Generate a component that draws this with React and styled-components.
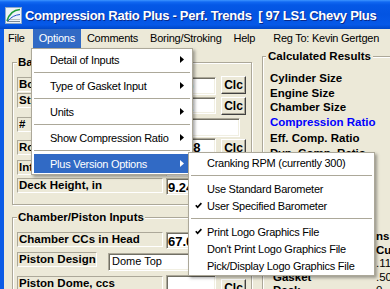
import React from "react";
import styled, { createGlobalStyle } from "styled-components";

const Global = createGlobalStyle`
  html, body { margin: 0; padding: 0; background: #ECE9D8; }
  #root { width: 390px; height: 289px; overflow: hidden; }
`;

const UI = `"Liberation Sans", Arial, sans-serif`;

const Window = styled.div`
  position: relative;
  width: 390px;
  height: 289px;
  overflow: hidden;
  display: flex;
  flex-direction: column;
  background: #ECE9D8;
  font-family: ${UI};
`;

const TitleBar = styled.div`
  flex: none;
  height: 29px;
  box-sizing: border-box;
  padding: 2px 0 0 5px;
  display: flex;
  align-items: center;
  gap: 3px;
  background: linear-gradient(
    to bottom,
    #3D95FF 0px,
    #1168F2 2px,
    #0558E6 5px,
    #0354E2 50%,
    #0659E8 85%,
    #0048C8 100%
  );
  white-space: nowrap;
`;

const TitleText = styled.span`
  color: #fff;
  font: bold 13px/16px ${UI};
  letter-spacing: -0.28px;
  white-space: pre;
  text-shadow: 1px 1px 0 #0A2A8A;
`;

const Frame = styled.div`
  flex: 1;
  display: flex;
  flex-direction: column;
  border-left: 4px solid #0B5BE6;
  min-height: 0;
`;

const MenuBar = styled.div`
  flex: none;
  height: 19px;
  display: flex;
  align-items: stretch;
  font: 11px/19px ${UI};
  letter-spacing: -0.25px;
  color: #000;
  white-space: nowrap;
`;

const MenuBarItem = styled.div`
  padding: 0 6px 0 ${(p) => p.$pl ?? 6}px;
  padding-right: ${(p) => p.$pr ?? 6}px;
  background: ${(p) => (p.$active ? "#316AC5" : "transparent")};
  color: ${(p) => (p.$active ? "#fff" : "#000")};
`;

const RegLabel = styled.div`
  margin-left: 12px;
`;

const Content = styled.div`
  flex: 1;
  display: flex;
  align-items: flex-start;
  padding-left: 8px;
  min-height: 0;
`;

const LeftCol = styled.div`
  flex: none;
  width: 240px;
  display: flex;
  flex-direction: column;
`;

const RightCol = styled.div`
  flex: none;
  width: 170px;
  margin-left: 10px;
`;

const Group = styled.fieldset`
  box-sizing: border-box;
  min-width: 0;
  margin: ${(p) => p.$mt}px 0 0 0;
  padding: ${(p) => p.$pt}px ${(p) => p.$pr ?? 4}px ${(p) => p.$pb ?? 0}px ${(p) => p.$pl ?? 4}px;
  border: 1px solid #ACA899;
  box-shadow: inset 1px 1px 0 #fff, 1px 1px 0 #fff;
  display: flex;
  flex-direction: column;
`;

const Legend = styled.legend`
  padding: 0 ${(p) => p.$px ?? 1}px;
  font: bold 11.5px/13px ${UI};
  color: #000;
  background: #ECE9D8;
  white-space: nowrap;
`;

const Row = styled.div`
  display: flex;
  align-items: flex-start;
  height: ${(p) => p.$h}px;
`;

const FieldLabel = styled.div`
  box-sizing: border-box;
  flex: none;
  width: ${(p) => p.$w ?? 146}px;
  height: 15px;
  margin-top: ${(p) => p.$dy ?? 0}px;
  padding-left: 1px;
  border: 1px solid;
  border-color: #ACA899 #fff #fff #ACA899;
  font: bold 11.5px/13px ${UI};
  color: #000;
  white-space: pre;
  overflow: hidden;
`;

const TextBox = styled.div`
  box-sizing: border-box;
  flex: none;
  width: ${(p) => p.$w ?? 50}px;
  height: ${(p) => p.$h ?? 18}px;
  margin-left: ${(p) => p.$ml ?? 3}px;
  margin-top: ${(p) => p.$dy ?? 0}px;
  padding: 1px 0 0 1px;
  background: #fff;
  border: 1px solid;
  border-color: #ACA899 #fff #fff #ACA899;
  box-shadow: inset 1px 1px 0 #716F64, inset -1px -1px 0 #F1EFE2;
  font: bold 13px/15px ${UI};
  color: #000;
  white-space: nowrap;
  overflow: hidden;
`;

const Combo = styled(TextBox)`
  display: flex;
  justify-content: space-between;
  padding: 0 0 0 3px;
  font: 11px/15px ${UI};
`;

const ComboButton = styled.span`
  width: 15px;
  background: #ECE9D8;
  border-left: 1px solid #fff;
`;

const ClcButton = styled.div`
  box-sizing: border-box;
  flex: none;
  width: 25px;
  height: 18px;
  margin-left: 5px;
  margin-top: ${(p) => p.$dy ?? 0}px;
  background: #ECE9D8;
  border: 1px solid;
  border-color: #fff #404040 #404040 #fff;
  box-shadow: inset -1px -1px 0 #ACA899;
  font: bold 12px/16px ${UI};
  color: #000;
  text-align: center;
`;

const ResultList = styled.div`
  display: flex;
  flex-direction: column;
  padding-left: 4px;
`;

const Result = styled.div`
  font: bold 11.5px/14.5px ${UI};
  color: ${(p) => p.$color ?? "#000"};
  margin-top: ${(p) => p.$mt ?? 0}px;
  white-space: nowrap;
`;

const LowerGrid = styled.div`
  display: grid;
  grid-template-columns: 103px auto;
  grid-auto-rows: 13.5px;
  margin-top: 70px;
  padding-left: 7px;
  font: 11.5px/13.5px ${UI};
  color: #000;
  white-space: nowrap;
`;

const Cell = styled.div`
  font-weight: ${(p) => (p.$bold ? "bold" : "normal")};
`;

/* ---------- menus ---------- */

const Menu = styled.div`
  position: absolute;
  left: ${(p) => p.$x}px;
  top: ${(p) => p.$y}px;
  width: ${(p) => p.$w}px;
  box-sizing: border-box;
  padding: 1px 2px;
  background: #fff;
  border: 1px solid #ACA899;
  box-shadow: 2px 2px 3px rgba(0, 0, 0, 0.35);
  font: 11px ${UI};
  letter-spacing: -0.25px;
  color: #000;
  white-space: nowrap;
`;

const MenuItem = styled.div`
  display: flex;
  align-items: center;
  height: ${(p) => p.$h}px;
  padding-right: 6px;
  background: ${(p) => (p.$active ? "#316AC5" : "transparent")};
  color: ${(p) => (p.$active ? "#fff" : "#000")};
`;

const CheckSlot = styled.span`
  flex: none;
  width: 16px;
  display: flex;
  align-items: center;
  padding-left: 4px;
  box-sizing: border-box;
`;

const ItemText = styled.span`
  flex: 1;
`;

const Separator = styled.div`
  height: ${(p) => p.$h}px;
  display: flex;
  align-items: center;
  &::after {
    content: "";
    flex: 1;
    height: 1px;
    background: #ACA899;
  }
`;

const Arrow = ({ color }) => (
  <svg width="4" height="7" viewBox="0 0 4 7">
    <polygon points="0,0 4,3.5 0,7" fill={color} />
  </svg>
);

const Check = () => (
  <svg width="7" height="7" viewBox="0 0 7 7">
    <polyline
      points="0.8,3.3 2.6,5.3 6.4,1.2"
      fill="none"
      stroke="#000"
      strokeWidth="1.7"
    />
  </svg>
);

const AppIcon = () => (
  <svg width="17" height="17" viewBox="0 0 17 17">
    <rect x="0.5" y="0.5" width="16" height="16" fill="#EEF3F8" stroke="#8FA9C8" />
    <line x1="2" y1="14.5" x2="15" y2="14.5" stroke="#7A8A9A" strokeWidth="1" />
    <line x1="2" y1="12.5" x2="15" y2="12.5" stroke="#B0BCC8" strokeWidth="1" />
    <path d="M2 14 C4 7 8 3 15 2.5" fill="none" stroke="#1E9C3A" strokeWidth="1.6" />
    <path d="M3 14 C6 10 10 8 15 7.5" fill="none" stroke="#2050C8" strokeWidth="1" />
  </svg>
);

const basicRows = [
  { label: "Bore, in", dy: 1, h: 20, value: "3.90", tdy: 1, clc: 0 },
  { label: "Stroke, in", dy: -3, h: 21, value: "3.62", tdy: 1, th: 17, clc: 1 },
  { label: "#     Cylinders", dy: 0, h: 21, value: "8", tdy: 1, th: 19, tw: 74 },
  { label: "Rod Length, in", dy: 2, h: 20, value: "6.098", tdy: 0, th: 19, clc: 1 },
  { label: "Intake Closing, deg", dy: 2, h: 20, value: "", tdy: 0 },
  { label: "Deck Height, in", dy: 0, h: 18, value: "9.240", tdy: 0, th: 17 },
];

const results = [
  { text: "Cylinder Size" },
  { text: "Engine Size" },
  { text: "Chamber Size" },
  { text: "Compression Ratio", color: "#0000FF" },
  { text: "Eff. Comp. Ratio", mt: 2 },
  { text: "Dyn. Comp. Ratio" },
];

const lower = [
  ["", "ns", true],
  ["", "Cu.", true],
  ["", ".11", false],
  ["Gasket", ".50", false],
  ["Deck", "0", false],
];

const optionsMenu = [
  "Detail of Inputs",
  "Type of Gasket Input",
  "Units",
  "Show Compression Ratio",
  "Plus Version Options",
];

const plusMenu = [
  { text: "Cranking RPM (currently 300)" },
  "sep",
  { text: "Use Standard Barometer" },
  { text: "User Specified Barometer", checked: true },
  "sep",
  { text: "Print Logo Graphics File", checked: true },
  { text: "Don't Print Logo Graphics File" },
  { text: "Pick/Display Logo Graphics File" },
];

export default function App() {
  return (
    <>
      <Global />
      <Window>
        <TitleBar>
          <AppIcon />
          <TitleText>Compression Ratio Plus - Perf. Trends  [ 97 LS1 Chevy Plus</TitleText>
        </TitleBar>
        <Frame>
          <MenuBar>
            <MenuBarItem $pl={4} $pr={8}>File</MenuBarItem>
            <MenuBarItem $active>Options</MenuBarItem>
            <MenuBarItem>Comments</MenuBarItem>
            <MenuBarItem>Boring/Stroking</MenuBarItem>
            <MenuBarItem>Help</MenuBarItem>
            <RegLabel>Reg To: Kevin Gertgen</RegLabel>
          </MenuBar>
          <Content>
            <LeftCol>
              <Group $mt={8} $pt={7} $pb={8}>
                <Legend>Basic Inputs</Legend>
                {basicRows.map((r) => (
                  <Row key={r.label} $h={r.h}>
                    <FieldLabel $dy={r.dy}>{r.label}</FieldLabel>
                    <TextBox $dy={r.tdy} $h={r.th} $w={r.tw}>
                      {r.value}
                    </TextBox>
                    {r.clc !== undefined && <ClcButton $dy={r.clc}>Clc</ClcButton>}
                  </Row>
                ))}
              </Group>
              <Group $mt={6} $pt={8} $pb={4}>
                <Legend>Chamber/Piston Inputs</Legend>
                <Row $h={20}>
                  <FieldLabel>Chamber CCs in Head</FieldLabel>
                  <TextBox $h={17}>67.0</TextBox>
                </Row>
                <Row $h={23}>
                  <FieldLabel $w={80}>Piston Design</FieldLabel>
                  <Combo $w={142} $ml={11} $dy={1} $h={18}>
                    Dome Top
                    <ComboButton />
                  </Combo>
                </Row>
                <Row $h={24}>
                  <FieldLabel $dy={1}>Piston Dome, ccs</FieldLabel>
                  <TextBox $h={18} />
                  <ClcButton $dy={4}>Clc</ClcButton>
                </Row>
              </Group>
            </LeftCol>
            <RightCol>
              <Group $mt={2} $pt={8} $pl={3} $pr={0} $pb={20}>
                <Legend $px={2}>Calculated Results</Legend>
                <ResultList>
                  {results.map((r) => (
                    <Result key={r.text} $color={r.color} $mt={r.mt}>
                      {r.text}
                    </Result>
                  ))}
                </ResultList>
                <LowerGrid>
                  {lower.map(([a, b, bold], i) => (
                    <React.Fragment key={i}>
                      <Cell $bold>{a}</Cell>
                      <Cell $bold={bold}>{b}</Cell>
                    </React.Fragment>
                  ))}
                </LowerGrid>
              </Group>
            </RightCol>
          </Content>
        </Frame>

        <Menu $x={31} $y={48} $w={162}>
          {optionsMenu.map((t, i) => (
            <React.Fragment key={t}>
              {i > 0 && <Separator $h={7} />}
              <MenuItem $h={19} $active={i === optionsMenu.length - 1}>
                <CheckSlot />
                <ItemText>{t}</ItemText>
                <Arrow color={i === optionsMenu.length - 1 ? "#fff" : "#000"} />
              </MenuItem>
            </React.Fragment>
          ))}
        </Menu>

        <Menu $x={188} $y={152} $w={187}>
          {plusMenu.map((it, i) =>
            it === "sep" ? (
              <Separator key={i} $h={9} />
            ) : (
              <MenuItem key={i} $h={17}>
                <CheckSlot>{it.checked && <Check />}</CheckSlot>
                <ItemText>{it.text}</ItemText>
              </MenuItem>
            )
          )}
        </Menu>
      </Window>
    </>
  );
}
